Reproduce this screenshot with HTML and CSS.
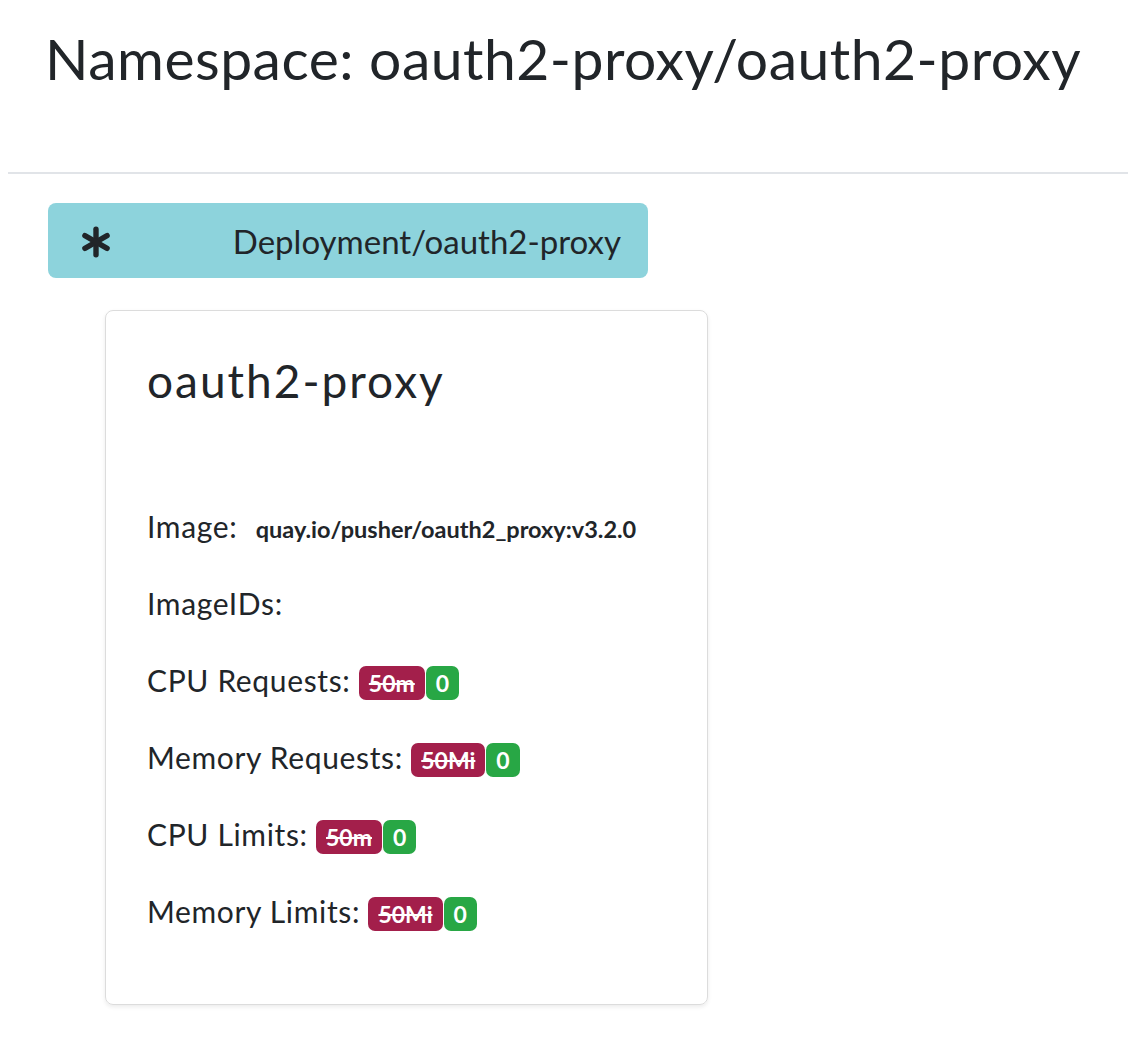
FILE: index.html
```html
<!DOCTYPE html>
<html>
<head>
<meta charset="utf-8">
<link rel="stylesheet" href="styles.css">
</head>
<body>
<div class="page">
  <h1 class="title">Namespace: oauth2-proxy/oauth2-proxy</h1>
  <hr class="rule">
  <div class="deploy">
    <svg class="star" width="32" height="32" viewBox="-16 -16 32 32" aria-hidden="true">
      <g stroke="#212529" stroke-width="5.4" stroke-linecap="round">
        <line x1="0" y1="-12.8" x2="0" y2="12.8"/>
        <line x1="0" y1="-12.8" x2="0" y2="12.8" transform="rotate(60)"/>
        <line x1="0" y1="-12.8" x2="0" y2="12.8" transform="rotate(120)"/>
      </g>
    </svg>
    <span class="deploy-name">Deployment/oauth2-proxy</span>
  </div>
  <div class="card">
    <h3 class="card-title">oauth2-proxy</h3>
    <div class="rows">
      <div class="row">Image: <span class="image-val">quay.io/pusher/oauth2_proxy:v3.2.0</span></div>
      <div class="row">ImageIDs:</div>
      <div class="row">CPU Requests: <span class="badges"><span class="badge old">50m</span><span class="badge new">0</span></span></div>
      <div class="row">Memory Requests: <span class="badges"><span class="badge old">50Mi</span><span class="badge new">0</span></span></div>
      <div class="row">CPU Limits: <span class="badges"><span class="badge old">50m</span><span class="badge new">0</span></span></div>
      <div class="row">Memory Limits: <span class="badges"><span class="badge old">50Mi</span><span class="badge new">0</span></span></div>
    </div>
  </div>
</div>
</body>
</html>
```
FILE: styles.css
```css
html, body {
  margin: 0;
  padding: 0;
  background: #fff;
}
body {
  font-family: "Lato", "Noto Sans", sans-serif;
  color: #212529;
}
.page {
  padding-left: 8px;
  padding-bottom: 40px;
}
.title {
  margin: 24px 0 0 37px;
  font-size: 57px;
  font-weight: 400;
  line-height: 68px;
  letter-spacing: 0.5px;
  white-space: nowrap;
}
.rule {
  margin: 80px 0 0 0;
  border: 0;
  border-top: 2px solid #e1e4e8;
  height: 0;
}
.deploy {
  margin: 29px 0 0 40px;
  width: 600px;
  height: 75px;
  box-sizing: border-box;
  background: #8dd3dc;
  border-radius: 8px;
  display: flex;
  align-items: center;
  justify-content: space-between;
  padding: 0 27px 0 32px;
}
.star {
  display: block;
  margin-top: 3px;
}
.deploy-name {
  font-size: 33px;
  line-height: 48px;
}
.card {
  margin: 32px 0 0 97px;
  width: 603px;
  height: 695px;
  box-sizing: border-box;
  border: 1px solid #dcdcdc;
  border-radius: 8px;
  box-shadow: 0 2px 4px rgba(0, 0, 0, 0.08);
  padding: 42px 40px 0 41px;
}
.card-title {
  margin: 0;
  font-size: 46px;
  font-weight: 400;
  line-height: 55px;
  letter-spacing: 2px;
}
.rows {
  margin-top: 80px;
  display: flex;
  flex-direction: column;
}
.row {
  height: 77px;
  line-height: 77px;
  font-size: 30px;
  letter-spacing: 0.65px;
  white-space: nowrap;
}
.image-val {
  font-size: 23.5px;
  font-weight: 700;
  letter-spacing: 0;
  margin-left: 10px;
}
.badges {
  display: inline-flex;
  gap: 1px;
  vertical-align: baseline;
  letter-spacing: 0;
}
.badge {
  display: inline-block;
  font-size: 23px;
  font-weight: 700;
  line-height: 23px;
  padding: 5.75px 10px 4.5px;
  color: #fff;
  border-radius: 7px;
}
.badge.old {
  background: #a31f4b;
  text-decoration: line-through;
}
.badge.new {
  background: #28a745;
}
```
